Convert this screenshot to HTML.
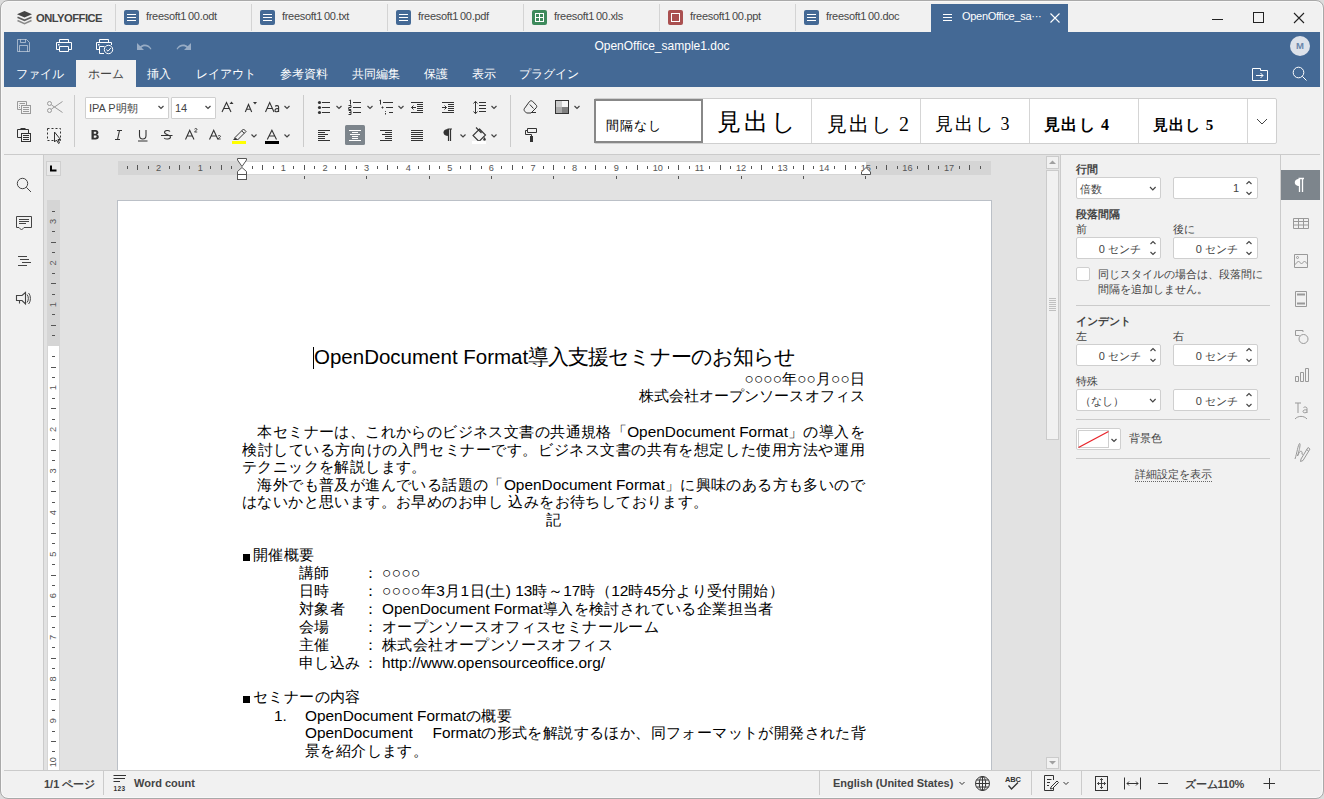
<!DOCTYPE html>
<html><head><meta charset="utf-8">
<style>
*{box-sizing:border-box;margin:0;padding:0}
html,body{width:1324px;height:799px;overflow:hidden;background:#dcdcdc;font-family:"Liberation Sans",sans-serif;color:#444}
.a{position:absolute}
.win{position:absolute;left:0;top:0;width:1324px;height:799px;border:1px solid #a9a9a9;border-radius:8px;background:#f1f1f1;overflow:hidden;box-shadow:inset 0 0 0 1px #f8f8f8}
svg{position:absolute;overflow:visible}
.sep{position:absolute;width:1px;background:#d4d4d4}
.tabt{position:absolute;font-size:11px;color:#474747;top:10px;letter-spacing:-0.3px;white-space:nowrap}
.menu{position:absolute;top:66px;font-size:12px;color:#fff;white-space:nowrap}
.tb{position:absolute;white-space:nowrap}
.combo{position:absolute;background:#fff;border:1px solid #cfcfcf;border-radius:1px}
.doc{position:absolute;white-space:nowrap;color:#000;font-size:15.4px;line-height:18px;letter-spacing:0.4px}
.L{letter-spacing:0}
.rp{position:absolute;font-size:11px;color:#444;white-space:nowrap}
.rpb{font-weight:bold}
.spin{position:absolute;background:#fff;border:1px solid #cfcfcf;border-radius:2px;width:85px;height:22px}
</style></head><body>
<div class="win"></div>
<!-- TAB BAR -->


<!-- logo -->
<svg style="left:0;top:0" width="40" height="32">
<path d="M24.5 11 L32 14.3 L24.5 17.6 L17 14.3 Z" fill="#444"/>
<path d="M17.5 17.2 L24.5 20.3 L31.5 17.2" fill="none" stroke="#5f5f5f" stroke-width="1.6"/>
<path d="M17.5 20.6 L24.5 23.7 L31.5 20.6" fill="none" stroke="#8a8a8a" stroke-width="1.6"/>
</svg>
<div class="a" style="left:36px;top:11px;font-size:11.2px;line-height:14px;font-weight:bold;color:#444;letter-spacing:-0.5px;white-space:nowrap">ONLYOFFICE</div>
<div class="sep" style="left:115px;top:4px;height:27px"></div>
<div class="sep" style="left:251px;top:4px;height:27px"></div>
<div class="sep" style="left:387px;top:4px;height:27px"></div>
<div class="sep" style="left:523px;top:4px;height:27px"></div>
<div class="sep" style="left:659px;top:4px;height:27px"></div>
<div class="sep" style="left:795px;top:4px;height:27px"></div>
<div class="a" style="left:124px;top:10px;width:15px;height:15px;background:#446995;border-radius:2px"></div>
<div class="a" style="left:127px;top:14px;width:9px;height:1px;background:#fff;box-shadow:0 3px 0 #fff,0 6px 0 #fff"></div>
<div class="tabt" style="left:146px">freesoft1&#8201;00.odt</div>
<div class="a" style="left:260px;top:10px;width:15px;height:15px;background:#446995;border-radius:2px"></div>
<div class="a" style="left:263px;top:14px;width:9px;height:1px;background:#fff;box-shadow:0 3px 0 #fff,0 6px 0 #fff"></div>
<div class="tabt" style="left:282px">freesoft1&#8201;00.txt</div>
<div class="a" style="left:396px;top:10px;width:15px;height:15px;background:#446995;border-radius:2px"></div>
<div class="a" style="left:399px;top:14px;width:9px;height:1px;background:#fff;box-shadow:0 3px 0 #fff,0 6px 0 #fff"></div>
<div class="tabt" style="left:418px">freesoft1&#8201;00.pdf</div>
<div class="a" style="left:532px;top:10px;width:15px;height:15px;background:#3d8a5c;border-radius:2px"></div>
<div class="a" style="left:535px;top:13px;width:9px;height:9px;background:#fff"></div>
<div class="a" style="left:536px;top:14px;width:3px;height:3px;background:#3d8a5c;box-shadow:4px 0 0 #3d8a5c,0 4px 0 #3d8a5c,4px 4px 0 #3d8a5c"></div>
<div class="tabt" style="left:554px">freesoft1&#8201;00.xls</div>
<div class="a" style="left:668px;top:10px;width:15px;height:15px;background:#aa5050;border-radius:2px"></div>
<div class="a" style="left:671px;top:13px;width:9px;height:9px;border:1px solid #fff;background:#aa5050"></div>
<div class="tabt" style="left:690px">freesoft1&#8201;00.ppt</div>
<div class="a" style="left:804px;top:10px;width:15px;height:15px;background:#446995;border-radius:2px"></div>
<div class="a" style="left:807px;top:14px;width:9px;height:1px;background:#fff;box-shadow:0 3px 0 #fff,0 6px 0 #fff"></div>
<div class="tabt" style="left:826px">freesoft1&#8201;00.doc</div>

<!-- active tab -->
<div class="a" style="left:931px;top:4px;width:137px;height:29px;background:#446995"></div>
<div class="a" style="left:943px;top:14px;width:9px;height:1px;background:#fff;box-shadow:0 3px 0 #fff,0 6px 0 #fff"></div>
<div class="tabt" style="left:962px;color:#fff">OpenOffice_sa&#183;&#183;&#183;</div>
<svg style="left:1050px;top:13px" width="10" height="10"><path d="M0.5 0.5 L9.5 9.5 M9.5 0.5 L0.5 9.5" stroke="#fff" stroke-width="1.1"/></svg>
<!-- window controls -->
<div class="a" style="left:1212px;top:19px;width:11px;height:1px;background:#222"></div>
<div class="a" style="left:1253px;top:12px;width:11px;height:11px;border:1px solid #222"></div>
<svg style="left:1293px;top:12px" width="12" height="12"><path d="M1 1 L11 11 M11 1 L1 11" stroke="#222" stroke-width="1.1"/></svg>

<!-- HEADER -->
<div class="a" style="left:4px;top:32px;width:1316px;height:55px;background:#446995"></div>

<!-- title icons -->
<svg style="left:0;top:32px" width="200" height="28" fill="none" stroke-width="1">
<g stroke="rgba(255,255,255,0.5)">
<path d="M17.5 7.5 H26.5 L29.5 10.5 V19.5 H17.5 Z"/>
<path d="M20.5 7.5 V10.5 H25.5 V7.5"/>
<path d="M19.5 19.5 V13.5 H27.5 V19.5"/>
</g>
<g stroke="#fff">
<path d="M59.5 10 V7.5 H68.5 V10"/>
<path d="M59.5 17.5 H56.5 V10.5 H71.5 V17.5 H68.5"/>
<path d="M59.5 14.5 H68.5 V19.5 H59.5 Z"/>
<path d="M99.5 10 V7.5 H108.5 V10"/>
<path d="M99.5 17.5 H96.5 V10.5 H111.5 V13"/>
<path d="M99.5 14.5 H104.5 M99.5 14.5 V21.5 H104"/>
<circle cx="108.5" cy="17.5" r="4.2"/>
<path d="M106.3 17.6 L108 19.2 L110.8 16"/>
</g>
<rect x="58" y="12" width="1.5" height="1.5" fill="#fff" stroke="none"/>
<rect x="98" y="12" width="1.5" height="1.5" fill="#fff" stroke="none"/>
<g fill="rgba(255,255,255,0.45)" stroke="none">
<path d="M137 11 L137 18 L144 18 L141.5 15.5 C144 13.5 148 13.8 150.5 17.5 L151.5 17 C149 12 143.5 11.5 140.3 14.3 Z"/>
<path d="M191 11 L191 18 L184 18 L186.5 15.5 C184 13.5 180 13.8 177.5 17.5 L176.5 17 C179 12 184.5 11.5 187.7 14.3 Z"/>
</g>
</svg>
<div class="a" style="left:0;top:39px;width:1324px;text-align:center;font-size:12px;color:#fff;white-space:nowrap">OpenOffice_sample1.doc</div>
<div class="a" style="left:1290px;top:36px;width:20px;height:20px;border-radius:50%;background:#dde2ea"></div>
<div class="a" style="left:1290px;top:40px;width:20px;text-align:center;font-size:9.5px;line-height:11px;font-weight:bold;color:#6a86ab">M</div>
<!-- menu -->
<div class="a" style="left:76px;top:60px;width:60px;height:27px;background:#f1f1f1"></div>
<div class="menu" style="left:16px">ファイル</div>
<div class="menu" style="left:88px;color:#444">ホーム</div>
<div class="menu" style="left:147px">挿入</div>
<div class="menu" style="left:196px">レイアウト</div>
<div class="menu" style="left:280px">参考資料</div>
<div class="menu" style="left:352px">共同編集</div>
<div class="menu" style="left:424px">保護</div>
<div class="menu" style="left:472px">表示</div>
<div class="menu" style="left:519px">プラグイン</div>
<svg style="left:1240px;top:60px" width="80" height="27" fill="none" stroke="#fff" stroke-width="1">
<path d="M12.5 20.5 V8.5 H20.5 V10.5 H27.5 V20.5 Z"/>
<path d="M16 15.5 H23 M20.5 13 L23 15.5 L20.5 18"/>
<circle cx="58.5" cy="12.5" r="5.3"/>
<path d="M62.3 16.3 L66.5 20.5"/>
</svg>
<!-- TOOLBAR -->
<div class="a" style="left:4px;top:87px;width:1316px;height:68px;background:#f1f1f1;border-bottom:1px solid #cbcbcb"></div>

<!-- combos -->
<div class="combo" style="left:85px;top:97px;width:84px;height:22px"></div>
<div class="tb" style="left:89px;top:101px;font-size:11px;line-height:14px;color:#444">IPA P明朝</div>
<div class="combo" style="left:171px;top:97px;width:45px;height:22px"></div>
<div class="tb" style="left:175px;top:101px;font-size:11px;line-height:14px;color:#444">14</div>
<!-- toolbar icons -->
<svg style="left:0;top:0" width="600" height="155" fill="none" stroke-width="1">
<!-- copy (disabled) -->
<g stroke="#9a9a9a">
<path d="M21 109.5 H17.5 V101.5 H26.5 V105"/>
<rect x="21.5" y="105.5" width="9" height="8"/>
<path d="M23 107.5 H29 M23 109.5 H29 M23 111.5 H29 M19.5 103.5 H25"/><path d="M19.5 105 V106 M19.5 107 V108" />
<circle cx="49.5" cy="103.5" r="2"/><circle cx="49.5" cy="110.5" r="2"/>
<path d="M51.3 104.8 L62.5 112.5 M51.3 109.2 L62.5 101.5"/>
</g>
<!-- paste -->
<g stroke="#333">
<path d="M21 137.5 H17.5 V129.5 H28.5 V133"/>
<path d="M20.5 129 H25.5" stroke-width="2"/>
<rect x="21.5" y="133.5" width="9" height="8"/>
<path d="M23 135.5 H29 M23 137.5 H29 M23 139.5 H29"/>
<path d="M47.5 128.5 H60.5 V140.5 H47.5 Z" stroke-dasharray="2 2"/>
<path d="M54.5 132 V142 L56.5 140 L58.5 143.5 L59.5 143 L58 139.5 L60.5 139.5 Z" fill="#f1f1f1"/>
</g>
<path d="M74.5 95 V147" stroke="#cbcbcb"/>
<path d="M303.5 95 V147" stroke="#cbcbcb"/>
<path d="M510.5 95 V147" stroke="#cbcbcb"/>
<!-- chevrons -->
<g stroke="#444" stroke-width="1.2">
<path d="M158.5 106 L161 108.5 L163.5 106"/>
<path d="M205.5 106 L208 108.5 L210.5 106"/>
<path d="M284.5 106 L287 108.5 L289.5 106"/>
<path d="M251.5 134.5 L254 137 L256.5 134.5"/>
<path d="M284.5 134.5 L287 137 L289.5 134.5"/>
<path d="M336.5 106 L339 108.5 L341.5 106"/>
<path d="M367.5 106 L370 108.5 L372.5 106"/>
<path d="M398.5 106 L401 108.5 L403.5 106"/>
<path d="M491.5 106 L494 108.5 L496.5 106"/>
<path d="M460.5 134.5 L463 137 L465.5 134.5"/>
<path d="M491.5 134.5 L494 137 L496.5 134.5"/>
<path d="M574.5 106 L577 108.5 L579.5 106"/>
</g>
<!-- A+ A- Aa -->
<g stroke="#333" stroke-width="1.1">
<path d="M222 112 L226.5 102.5 L231 112 M223.6 108.5 H229.4"/>
<path d="M245.3 112 L248.5 104.5 L251.7 112 M246.5 109.2 H250.5"/>
<path d="M265.5 112 L269.7 102.5 L274 112 M267 108.5 H272.5"/>
</g>
<path d="M229.5 104 L231.5 101.5 L233.5 104 Z" fill="#333"/>
<path d="M253 102 L255 104.5 L257 102 Z" fill="#333"/>
<g stroke="#333" stroke-width="1.1"><path d="M275.2 106.3 C276 105.3 278.6 105.3 278.6 107 V112 M278.6 108.8 C277 108.3 275 108.8 275 110.5 C275 112.3 278 112 278.6 110.5"/></g>
<!-- B I U S A2 A2 -->
<path d="M91.5 130 H95.5 C97.8 130 98.4 131.5 98.4 132.6 C98.4 133.8 97.6 134.4 96.8 134.6 C98 134.8 98.8 135.7 98.8 137 C98.8 138.6 97.7 139.5 95.6 139.5 H91.5 Z" fill="#333"/>
<path d="M93.8 131.8 V133.8 H95.3 C96 133.8 96.3 133.3 96.3 132.8 C96.3 132.2 96 131.8 95.3 131.8 Z M93.8 135.6 V137.7 H95.5 C96.3 137.7 96.6 137.2 96.6 136.6 C96.6 136 96.3 135.6 95.5 135.6 Z" fill="#f1f1f1"/>
<g stroke="#333" stroke-width="1.1">
<path d="M117 130.5 H122 M115 139.5 H120 M119.5 130.5 L117.5 139.5"/>
<path d="M139.5 130 V135.5 C139.5 138 140.8 139 142.8 139 C144.8 139 146 138 146 135.5 V130 M138 141 H147.5"/>
<path d="M170 131.5 C169 130.2 164.5 130 164.5 132.5 C164.5 135 170.5 134.5 170.5 137 C170.5 139.5 165.5 139.5 164.2 138 M161 135.5 H172.5"/>
<path d="M185.5 139.5 L189.7 130.2 L194 139.5 M187 136 H192.5"/>
<path d="M209.5 139.5 L213.7 130.2 L218 139.5 M211 136 H216.5"/>
</g>
<g stroke="#333" stroke-width="0.9">
<path d="M194.5 129.2 C195 128.3 197 128.3 197 129.4 C197 130.3 194.5 131.3 194.5 132 H197.2"/>
<path d="M218 136.2 C218.5 135.3 220.5 135.3 220.5 136.4 C220.5 137.3 218 138.3 218 139 H220.7"/>
</g>
<!-- highlighter -->
<g stroke="#333"><path d="M235 137.5 L243.5 129 L246 131.5 L237.5 140 Z M241.7 130.8 L244.2 133.3"/></g>
<path d="M235 137.5 L233 140 L237.5 140 Z" fill="#333"/>
<rect x="232" y="141" width="14" height="3" fill="#ff0"/>
<g stroke="#333" stroke-width="1.1"><path d="M267.3 139.5 L271.9 130.2 L276.5 139.5 M269 136 H275"/></g>
<rect x="265" y="141" width="14" height="3" fill="#000"/>
<!-- lists -->
<g fill="#333"><circle cx="319.5" cy="102.5" r="1.6"/><circle cx="319.5" cy="107.5" r="1.6"/><circle cx="319.5" cy="112.5" r="1.6"/></g>
<g stroke="#333">
<path d="M322 102.5 H330 M322 107.5 H330 M322 112.5 H330"/>
<path d="M353 102.5 H361 M353 107.5 H361 M353 112.5 H361"/>
<path d="M349.5 100.5 L350.5 100 V104.5 M348.5 105.5 H351 V107.5 H348.7 V109.5 H351.2 M348.5 110.5 H351 V114.5 H348.5 M349 112.5 H351"/>
<path d="M379.5 100.5 L380.5 100 V104.5 M383 102.5 H393 M386 107.5 H393 M389 112.5 H393 M382.5 106.5 V108.5 M381.5 107.5 H383.5 M385.5 111 V111.8 M385.5 113 V114.5"/>
<!-- indent -->
<path d="M411 102.5 H423 M417 104.5 H423 M417 106.5 H423 M417 108.5 H423 M417 110.5 H423 M411 112.5 H423 M411.5 107.5 H416 M413.5 105.5 L411.5 107.5 L413.5 109.5"/>
<path d="M442 102.5 H454 M448 104.5 H454 M448 106.5 H454 M448 108.5 H454 M448 110.5 H454 M442 112.5 H454 M442 107.5 H446.5 M444.5 105.5 L446.5 107.5 L444.5 109.5"/>
<path d="M475.5 101.5 V113.5 M473.5 103.5 L475.5 101.3 L477.5 103.5 M473.5 111.5 L475.5 113.7 L477.5 111.5 M479 102.5 H486 M479 105.5 H486 M479 108.5 H486 M479 111.5 H486"/>
<!-- align -->
<path d="M318 130.5 H330 M318 132.5 H325 M318 134.5 H328 M318 136.5 H325 M318 138.5 H325 M318 140.5 H330"/>
<path d="M380 130.5 H392 M385 132.5 H392 M382 134.5 H392 M385 136.5 H392 M385 138.5 H392 M380 140.5 H392"/>
<path d="M411 130.5 H423 M411 132.5 H423 M411 134.5 H423 M411 136.5 H423 M411 138.5 H423 M411 140.5 H423"/>
</g>
<rect x="345" y="125" width="20" height="20" rx="1.5" fill="#7d858c"/>
<path d="M349 130.5 H361 M352 132.5 H358 M350 134.5 H360 M352 136.5 H358 M352 138.5 H358 M349 140.5 H361" stroke="#fff"/>
<!-- pilcrow -->
<path d="M447.5 129 H452 M448.5 129.5 V141 M450.5 129.5 V141" stroke="#333" stroke-width="1.2"/>
<path d="M448.5 129 C445 129 443.5 130.5 443.5 132.5 C443.5 134.5 445 136 448.5 136 Z" fill="#333"/>
<!-- bucket -->
<path d="M479.5 129 L485.5 135 L479 141.5 L473 135.5 Z M476 127.5 L481.5 133" stroke="#333" stroke-width="1.1"/>
<path d="M484.5 137 C483.5 138.5 483.2 139 483.2 139.5 C483.2 140.3 483.8 140.7 484.5 140.7 C485.2 140.7 485.8 140.3 485.8 139.5 C485.8 139 485.5 138.5 484.5 137 Z" fill="#333"/>
<rect x="472" y="141" width="14" height="3" fill="#fff"/>
<!-- eraser -->
<path d="M529.5 101.5 C530.5 100.5 531.7 100.5 532.7 101.5 L536 104.8 C537 105.8 537 107 536 108 L531 113 H526.5 L524.8 111.3 C523.8 110.3 523.8 109 524.8 108 Z M529.8 104.5 L533.5 108.5 M531 112.5 H536" stroke="#333"/>
<!-- color scheme -->
<rect x="555.5" y="100.5" width="13" height="13" stroke="#333" stroke-width="1"/>
<rect x="556" y="101" width="6" height="6" fill="#ccc"/><rect x="562" y="101" width="6" height="6" fill="#f5f5f5"/>
<rect x="556" y="107" width="6" height="6" fill="#aaa"/><rect x="562" y="107" width="6" height="6" fill="#808080"/>
<!-- painter -->
<path d="M527.5 128.5 H536.5 V132.5 H527.5 Z M527.5 130.5 H525.5 V134.5 H531.5 V136" stroke="#333"/>
<rect x="530" y="136" width="3" height="6" fill="#333"/>
</svg>

<!-- style gallery -->
<div class="a" style="left:594px;top:98px;width:683px;height:46px;background:#fff;border:1px solid #cfcfcf;border-radius:2px"></div>
<div class="a" style="left:811px;top:99px;width:1px;height:44px;background:#d5d5d5"></div>
<div class="a" style="left:920px;top:99px;width:1px;height:44px;background:#d5d5d5"></div>
<div class="a" style="left:1029px;top:99px;width:1px;height:44px;background:#d5d5d5"></div>
<div class="a" style="left:1138px;top:99px;width:1px;height:44px;background:#d5d5d5"></div>
<div class="a" style="left:1247px;top:99px;width:1px;height:44px;background:#d5d5d5"></div>
<div class="a" style="left:594px;top:99px;width:109px;height:44px;border:2px solid #888"></div>
<div class="tb" style="left:606px;top:118px;font-size:13px;line-height:16px;color:#000;letter-spacing:1px">間隔なし</div>
<div class="tb" style="left:717px;top:108px;font-family:'Liberation Serif',serif;font-size:24px;line-height:28px;color:#000;letter-spacing:3px">見出し</div>
<div class="tb" style="left:827px;top:112px;font-family:'Liberation Serif',serif;font-size:20px;line-height:24px;color:#000;letter-spacing:1.75px">見出し 2</div>
<div class="tb" style="left:935px;top:113px;font-family:'Liberation Serif',serif;font-size:18px;line-height:22px;color:#000;letter-spacing:1.75px">見出し 3</div>
<div class="tb" style="left:1044px;top:115px;font-family:'Liberation Serif',serif;font-size:16px;line-height:20px;font-weight:bold;color:#000;letter-spacing:1.25px">見出し 4</div>
<div class="tb" style="left:1153px;top:116px;font-family:'Liberation Serif',serif;font-size:15px;line-height:19px;font-weight:bold;color:#000;letter-spacing:1px">見出し 5</div>
<svg style="left:1247px;top:98px" width="30" height="46"><path d="M10 21 L15 26 L20 21" fill="none" stroke="#444" stroke-width="1"/></svg>
<!-- LEFT SIDEBAR -->
<div class="a" style="left:4px;top:155px;width:40px;height:615px;background:#f1f1f1;border-right:1px solid #cbcbcb"></div>

<!-- left sidebar icons -->
<svg style="left:0;top:155px" width="44" height="160" fill="none" stroke="#444" stroke-width="1">
<circle cx="22.5" cy="28.5" r="5.2"/>
<path d="M26.3 32.3 L31 37"/>
<path d="M16.5 61.5 H31.5 V72.5 H24 L21.5 75 L19 72.5 H16.5 Z"/>
<path d="M19 64.5 H29 M19 66.5 H29 M19 68.5 H26"/>
<path d="M18 101.5 H27 M20 104.5 H29 M22 107.5 H31 M18 110.5 H27" stroke-width="1.1"/>
<path d="M16.5 140.5 H22 L25.5 137.5 V149 L22 145.5 H16.5 Z M19.5 145.5 V148.5" stroke-width="1.1"/>
<path d="M27 139.5 C28.8 141.3 28.8 145.7 27 147.5 M28.5 138 C31 140.5 31 146.5 28.5 149"/>
</svg>
<!-- CANVAS -->
<div class="a" style="left:44px;top:155px;width:1016px;height:615px;background:#e2e2e2"></div>
<!-- RULER -->
<svg style="left:0;top:0" width="1060" height="800">
<rect x="118" y="161" width="873" height="14" fill="#d5d5d5"/>
<rect x="242" y="162" width="624" height="12" fill="#fff"/>
<rect x="127" y="166" width="1" height="3" fill="#555"/>
<rect x="137" y="165" width="1" height="5" fill="#555"/>
<rect x="148" y="166" width="1" height="3" fill="#555"/>
<rect x="169" y="166" width="1" height="3" fill="#555"/>
<rect x="179" y="165" width="1" height="5" fill="#555"/>
<rect x="189" y="166" width="1" height="3" fill="#555"/>
<text x="158.6" y="170.6" font-size="9.2" fill="#555" text-anchor="middle" font-family="Liberation Sans">2</text>
<rect x="210" y="166" width="1" height="3" fill="#555"/>
<rect x="221" y="165" width="1" height="5" fill="#555"/>
<rect x="231" y="166" width="1" height="3" fill="#555"/>
<text x="200.2" y="170.6" font-size="9.2" fill="#555" text-anchor="middle" font-family="Liberation Sans">1</text>
<rect x="252" y="166" width="1" height="3" fill="#555"/>
<rect x="262" y="165" width="1" height="5" fill="#555"/>
<rect x="273" y="166" width="1" height="3" fill="#555"/>
<rect x="293" y="166" width="1" height="3" fill="#555"/>
<rect x="304" y="165" width="1" height="5" fill="#555"/>
<rect x="314" y="166" width="1" height="3" fill="#555"/>
<text x="283.4" y="170.6" font-size="9.2" fill="#555" text-anchor="middle" font-family="Liberation Sans">1</text>
<rect x="335" y="166" width="1" height="3" fill="#555"/>
<rect x="345" y="165" width="1" height="5" fill="#555"/>
<rect x="356" y="166" width="1" height="3" fill="#555"/>
<text x="325.0" y="170.6" font-size="9.2" fill="#555" text-anchor="middle" font-family="Liberation Sans">2</text>
<rect x="377" y="166" width="1" height="3" fill="#555"/>
<rect x="387" y="165" width="1" height="5" fill="#555"/>
<rect x="397" y="166" width="1" height="3" fill="#555"/>
<text x="366.6" y="170.6" font-size="9.2" fill="#555" text-anchor="middle" font-family="Liberation Sans">3</text>
<rect x="418" y="166" width="1" height="3" fill="#555"/>
<rect x="429" y="165" width="1" height="5" fill="#555"/>
<rect x="439" y="166" width="1" height="3" fill="#555"/>
<text x="408.2" y="170.6" font-size="9.2" fill="#555" text-anchor="middle" font-family="Liberation Sans">4</text>
<rect x="460" y="166" width="1" height="3" fill="#555"/>
<rect x="470" y="165" width="1" height="5" fill="#555"/>
<rect x="481" y="166" width="1" height="3" fill="#555"/>
<text x="449.8" y="170.6" font-size="9.2" fill="#555" text-anchor="middle" font-family="Liberation Sans">5</text>
<rect x="501" y="166" width="1" height="3" fill="#555"/>
<rect x="512" y="165" width="1" height="5" fill="#555"/>
<rect x="522" y="166" width="1" height="3" fill="#555"/>
<text x="491.4" y="170.6" font-size="9.2" fill="#555" text-anchor="middle" font-family="Liberation Sans">6</text>
<rect x="543" y="166" width="1" height="3" fill="#555"/>
<rect x="553" y="165" width="1" height="5" fill="#555"/>
<rect x="564" y="166" width="1" height="3" fill="#555"/>
<text x="533.0" y="170.6" font-size="9.2" fill="#555" text-anchor="middle" font-family="Liberation Sans">7</text>
<rect x="585" y="166" width="1" height="3" fill="#555"/>
<rect x="595" y="165" width="1" height="5" fill="#555"/>
<rect x="605" y="166" width="1" height="3" fill="#555"/>
<text x="574.6" y="170.6" font-size="9.2" fill="#555" text-anchor="middle" font-family="Liberation Sans">8</text>
<rect x="626" y="166" width="1" height="3" fill="#555"/>
<rect x="637" y="165" width="1" height="5" fill="#555"/>
<rect x="647" y="166" width="1" height="3" fill="#555"/>
<text x="616.2" y="170.6" font-size="9.2" fill="#555" text-anchor="middle" font-family="Liberation Sans">9</text>
<rect x="668" y="166" width="1" height="3" fill="#555"/>
<rect x="678" y="165" width="1" height="5" fill="#555"/>
<rect x="689" y="166" width="1" height="3" fill="#555"/>
<text x="657.8" y="170.6" font-size="9.2" fill="#555" text-anchor="middle" font-family="Liberation Sans">10</text>
<rect x="709" y="166" width="1" height="3" fill="#555"/>
<rect x="720" y="165" width="1" height="5" fill="#555"/>
<rect x="730" y="166" width="1" height="3" fill="#555"/>
<text x="699.4" y="170.6" font-size="9.2" fill="#555" text-anchor="middle" font-family="Liberation Sans">11</text>
<rect x="751" y="166" width="1" height="3" fill="#555"/>
<rect x="761" y="165" width="1" height="5" fill="#555"/>
<rect x="772" y="166" width="1" height="3" fill="#555"/>
<text x="741.0" y="170.6" font-size="9.2" fill="#555" text-anchor="middle" font-family="Liberation Sans">12</text>
<rect x="793" y="166" width="1" height="3" fill="#555"/>
<rect x="803" y="165" width="1" height="5" fill="#555"/>
<rect x="813" y="166" width="1" height="3" fill="#555"/>
<text x="782.6" y="170.6" font-size="9.2" fill="#555" text-anchor="middle" font-family="Liberation Sans">13</text>
<rect x="834" y="166" width="1" height="3" fill="#555"/>
<rect x="845" y="165" width="1" height="5" fill="#555"/>
<rect x="855" y="166" width="1" height="3" fill="#555"/>
<text x="824.2" y="170.6" font-size="9.2" fill="#555" text-anchor="middle" font-family="Liberation Sans">14</text>
<rect x="876" y="166" width="1" height="3" fill="#555"/>
<rect x="886" y="165" width="1" height="5" fill="#555"/>
<rect x="897" y="166" width="1" height="3" fill="#555"/>
<text x="865.8" y="170.6" font-size="9.2" fill="#555" text-anchor="middle" font-family="Liberation Sans">15</text>
<rect x="917" y="166" width="1" height="3" fill="#555"/>
<rect x="928" y="165" width="1" height="5" fill="#555"/>
<rect x="938" y="166" width="1" height="3" fill="#555"/>
<text x="907.4" y="170.6" font-size="9.2" fill="#555" text-anchor="middle" font-family="Liberation Sans">16</text>
<rect x="959" y="166" width="1" height="3" fill="#555"/>
<rect x="969" y="165" width="1" height="5" fill="#555"/>
<rect x="980" y="166" width="1" height="3" fill="#555"/>
<text x="949.0" y="170.6" font-size="9.2" fill="#555" text-anchor="middle" font-family="Liberation Sans">17</text>
<rect x="304" y="176" width="1" height="3" fill="#555"/>
<rect x="366" y="176" width="1" height="3" fill="#555"/>
<rect x="429" y="176" width="1" height="3" fill="#555"/>
<rect x="491" y="176" width="1" height="3" fill="#555"/>
<rect x="553" y="176" width="1" height="3" fill="#555"/>
<rect x="616" y="176" width="1" height="3" fill="#555"/>
<rect x="678" y="176" width="1" height="3" fill="#555"/>
<rect x="741" y="176" width="1" height="3" fill="#555"/>
<rect x="803" y="176" width="1" height="3" fill="#555"/>
<rect x="865" y="176" width="1" height="3" fill="#555"/>
<path d="M237.5 158.5 H246.5 V160 L242 166.5 L237.5 160 Z M242 167.5 L246.5 171.5 V174.5 H237.5 V171.5 Z" fill="#fff" stroke="#555" stroke-width="1"/>
<rect x="237.5" y="174.5" width="9" height="5" fill="#fff" stroke="#555" stroke-width="1"/>
<path d="M861.5 174.5 V172 L866 167.5 L870.5 172 V174.5 Z" fill="#fff" stroke="#555" stroke-width="1"/>
<rect x="46.5" y="161.5" width="14" height="14" fill="#e8e8e8" stroke="#cfcfcf"/>
<path d="M51 165.5 V170.5 H56.5" stroke="#000" stroke-width="2" fill="none"/>
<rect x="47" y="200" width="13" height="570" fill="#d5d5d5"/>
<rect x="48" y="346" width="11" height="430" fill="#fff"/>
<rect x="52" y="211" width="3" height="1" fill="#555"/>
<rect x="52" y="231" width="3" height="1" fill="#555"/>
<rect x="51" y="242" width="5" height="1" fill="#555"/>
<rect x="52" y="252" width="3" height="1" fill="#555"/>
<text x="0" y="0" transform="translate(55.8 221.4) rotate(-90)" font-size="9.2" fill="#555" text-anchor="middle" font-family="Liberation Sans">3</text>
<rect x="52" y="273" width="3" height="1" fill="#555"/>
<rect x="51" y="283" width="5" height="1" fill="#555"/>
<rect x="52" y="294" width="3" height="1" fill="#555"/>
<text x="0" y="0" transform="translate(55.8 263.0) rotate(-90)" font-size="9.2" fill="#555" text-anchor="middle" font-family="Liberation Sans">2</text>
<rect x="52" y="314" width="3" height="1" fill="#555"/>
<rect x="51" y="325" width="5" height="1" fill="#555"/>
<rect x="52" y="335" width="3" height="1" fill="#555"/>
<text x="0" y="0" transform="translate(55.8 304.6) rotate(-90)" font-size="9.2" fill="#555" text-anchor="middle" font-family="Liberation Sans">1</text>
<rect x="52" y="356" width="3" height="1" fill="#555"/>
<rect x="51" y="367" width="5" height="1" fill="#555"/>
<rect x="52" y="377" width="3" height="1" fill="#555"/>
<rect x="52" y="398" width="3" height="1" fill="#555"/>
<rect x="51" y="408" width="5" height="1" fill="#555"/>
<rect x="52" y="419" width="3" height="1" fill="#555"/>
<text x="0" y="0" transform="translate(55.8 387.8) rotate(-90)" font-size="9.2" fill="#555" text-anchor="middle" font-family="Liberation Sans">1</text>
<rect x="52" y="439" width="3" height="1" fill="#555"/>
<rect x="51" y="450" width="5" height="1" fill="#555"/>
<rect x="52" y="460" width="3" height="1" fill="#555"/>
<text x="0" y="0" transform="translate(55.8 429.4) rotate(-90)" font-size="9.2" fill="#555" text-anchor="middle" font-family="Liberation Sans">2</text>
<rect x="52" y="481" width="3" height="1" fill="#555"/>
<rect x="51" y="491" width="5" height="1" fill="#555"/>
<rect x="52" y="502" width="3" height="1" fill="#555"/>
<text x="0" y="0" transform="translate(55.8 471.0) rotate(-90)" font-size="9.2" fill="#555" text-anchor="middle" font-family="Liberation Sans">3</text>
<rect x="52" y="523" width="3" height="1" fill="#555"/>
<rect x="51" y="533" width="5" height="1" fill="#555"/>
<rect x="52" y="543" width="3" height="1" fill="#555"/>
<text x="0" y="0" transform="translate(55.8 512.6) rotate(-90)" font-size="9.2" fill="#555" text-anchor="middle" font-family="Liberation Sans">4</text>
<rect x="52" y="564" width="3" height="1" fill="#555"/>
<rect x="51" y="575" width="5" height="1" fill="#555"/>
<rect x="52" y="585" width="3" height="1" fill="#555"/>
<text x="0" y="0" transform="translate(55.8 554.2) rotate(-90)" font-size="9.2" fill="#555" text-anchor="middle" font-family="Liberation Sans">5</text>
<rect x="52" y="606" width="3" height="1" fill="#555"/>
<rect x="51" y="616" width="5" height="1" fill="#555"/>
<rect x="52" y="627" width="3" height="1" fill="#555"/>
<text x="0" y="0" transform="translate(55.8 595.8) rotate(-90)" font-size="9.2" fill="#555" text-anchor="middle" font-family="Liberation Sans">6</text>
<rect x="52" y="647" width="3" height="1" fill="#555"/>
<rect x="51" y="658" width="5" height="1" fill="#555"/>
<rect x="52" y="668" width="3" height="1" fill="#555"/>
<text x="0" y="0" transform="translate(55.8 637.4) rotate(-90)" font-size="9.2" fill="#555" text-anchor="middle" font-family="Liberation Sans">7</text>
<rect x="52" y="689" width="3" height="1" fill="#555"/>
<rect x="51" y="699" width="5" height="1" fill="#555"/>
<rect x="52" y="710" width="3" height="1" fill="#555"/>
<text x="0" y="0" transform="translate(55.8 679.0) rotate(-90)" font-size="9.2" fill="#555" text-anchor="middle" font-family="Liberation Sans">8</text>
<rect x="52" y="731" width="3" height="1" fill="#555"/>
<rect x="51" y="741" width="5" height="1" fill="#555"/>
<rect x="52" y="751" width="3" height="1" fill="#555"/>
<text x="0" y="0" transform="translate(55.8 720.6) rotate(-90)" font-size="9.2" fill="#555" text-anchor="middle" font-family="Liberation Sans">9</text>
<text x="0" y="0" transform="translate(55.8 762.2) rotate(-90)" font-size="9.2" fill="#555" text-anchor="middle" font-family="Liberation Sans">10</text>
</svg>
<!-- PAGE -->
<div class="a" style="left:117px;top:200px;width:875px;height:570px;background:#fff;border:1px solid #bbc0c7;border-bottom:none"></div>
<!-- DOC TEXT -->
<div class="a" style="left:313px;top:347px;width:1px;height:22px;background:#000"></div>
<div class="doc" style="left:314px;top:346px;font-size:20.5px;line-height:22px;letter-spacing:0"><span class="L">OpenDocument Format</span><span id="ttl" style="font-family:'Liberation Serif',serif;letter-spacing:-1px">導入支援セミナーのお知らせ</span></div>
<div class="doc" style="left:242px;top:369.7px;width:623px;text-align:right;letter-spacing:0.1px">○○○○年○○月○○日</div>
<div class="doc" style="left:242px;top:387.3px;width:623px;text-align:right;letter-spacing:0.1px">株式会社オープンソースオフィス</div>
<div class="doc" style="left:242px;top:423.0px;width:623px;text-align:justify;text-align-last:justify">　本セミナーは、これからのビジネス文書の共通規格「<span class="L">OpenDocument Format</span>」の導入を</div>
<div class="doc" style="left:242px;top:440.5px;width:623px;text-align:justify;text-align-last:justify">検討している方向けの入門セミナーです。ビジネス文書の共有を想定した使用方法や運用</div>
<div class="doc" style="left:242px;top:458.0px">テクニックを解説します。</div>
<div class="doc" style="left:242px;top:475.5px;width:623px;text-align:justify;text-align-last:justify">　海外でも普及が進んでいる話題の「<span class="L">OpenDocument Format</span>」に興味のある方も多いので</div>
<div class="doc" style="left:242px;top:493.0px">はないかと思います。お早めのお申し 込みをお待ちしております。</div>
<div class="doc" style="left:242px;top:511.0px;width:623px;text-align:center">記</div>
<div class="doc" style="left:242px;top:546.0px"><span style="display:inline-block;width:7px;height:7px;background:#000;margin:0 3px 0 1px;vertical-align:-1px"></span>開催概要</div>
<div class="doc" style="left:299px;top:564.0px">講師</div>
<div class="doc" style="left:363px;top:564.0px">：</div>
<div class="doc" style="left:382px;top:564.0px">○○○○</div>
<div class="doc" style="left:299px;top:582.0px">日時</div>
<div class="doc" style="left:363px;top:582.0px">：</div>
<div class="doc" style="left:382px;top:582.0px">○○○○年3月1日(土<span class="L">) 13</span>時～<span class="L">17</span>時（<span class="L">12</span>時<span class="L">45</span>分より受付開始）</div>
<div class="doc" style="left:299px;top:600.0px">対象者</div>
<div class="doc" style="left:363px;top:600.0px">：</div>
<div class="doc" style="left:382px;top:600.0px"><span class="L">OpenDocument Format</span>導入を検討されている企業担当者</div>
<div class="doc" style="left:299px;top:617.6px">会場</div>
<div class="doc" style="left:363px;top:617.6px">：</div>
<div class="doc" style="left:382px;top:617.6px">オープンソースオフィスセミナールーム</div>
<div class="doc" style="left:299px;top:635.5px">主催</div>
<div class="doc" style="left:363px;top:635.5px">：</div>
<div class="doc" style="left:382px;top:635.5px">株式会社オープンソースオフィス</div>
<div class="doc" style="left:299px;top:653.6px">申し込み</div>
<div class="doc" style="left:363px;top:653.6px">：</div>
<div class="doc" style="left:382px;top:653.6px"><span class="L">http://www.opensourceoffice.org/</span></div>
<div class="doc" style="left:242px;top:688.0px"><span style="display:inline-block;width:7px;height:7px;background:#000;margin:0 3px 0 1px;vertical-align:-1px"></span>セミナーの内容</div>
<div class="doc" style="left:274px;top:706.5px"><span class="L">1.</span></div>
<div class="doc" style="left:305px;top:706.5px"><span class="L">OpenDocument Format</span>の概要</div>
<div class="doc" style="left:305px;top:724.0px;width:559px;text-align:justify;text-align-last:justify"><span class="L">OpenDocument</span>　<span class="L"> Format</span>の形式を解説するほか、同フォーマットが開発された背</div>
<div class="doc" style="left:305px;top:741.5px">景を紹介します。</div>
<!-- RIGHT PANEL -->
<div class="a" style="left:1060px;top:155px;width:220px;height:615px;background:#f1f1f1;border-left:1px solid #cbcbcb"></div>
<div class="a" style="left:1280px;top:155px;width:40px;height:615px;background:#f1f1f1;border-left:1px solid #cbcbcb"></div>

<!-- RIGHT PANEL CONTENT -->
<div class="rp rpb" style="left:1076px;top:162px">行間</div>
<div class="spin" style="left:1076px;top:177px"></div>
<div class="rp" style="left:1080px;top:182px">倍数</div>
<div class="spin" style="left:1173px;top:177px"></div>
<div class="rp" style="left:1228px;top:182px;width:11px;text-align:right">1</div>
<div class="rp rpb" style="left:1076px;top:206.5px">段落間隔</div>
<div class="rp" style="left:1076px;top:222px">前</div>
<div class="rp" style="left:1173px;top:222px">後に</div>
<div class="spin" style="left:1076px;top:237px"></div>
<div class="rp" style="left:1076px;top:242px;width:65px;text-align:right">0 センチ</div>
<div class="spin" style="left:1173px;top:237px"></div>
<div class="rp" style="left:1173px;top:242px;width:65px;text-align:right">0 センチ</div>
<div class="a" style="left:1076px;top:267px;width:14px;height:14px;background:#fff;border:1px solid #cfcfcf;border-radius:2px"></div>
<div class="rp" style="left:1098px;top:266.5px;line-height:15px">同じスタイルの場合は、段落間に<br>間隔を追加しません。</div>
<div class="a" style="left:1076px;top:305px;width:194px;height:1px;background:#cbcbcb"></div>
<div class="rp rpb" style="left:1076px;top:313.5px">インデント</div>
<div class="rp" style="left:1076px;top:329px">左</div>
<div class="rp" style="left:1173px;top:329px">右</div>
<div class="spin" style="left:1076px;top:344px"></div>
<div class="rp" style="left:1076px;top:349px;width:65px;text-align:right">0 センチ</div>
<div class="spin" style="left:1173px;top:344px"></div>
<div class="rp" style="left:1173px;top:349px;width:65px;text-align:right">0 センチ</div>
<div class="rp" style="left:1076px;top:374px">特殊</div>
<div class="spin" style="left:1076px;top:389px"></div>
<div class="rp" style="left:1080px;top:394px">（なし）</div>
<div class="spin" style="left:1173px;top:389px"></div>
<div class="rp" style="left:1173px;top:394px;width:65px;text-align:right">0 センチ</div>
<div class="a" style="left:1076px;top:419px;width:194px;height:1px;background:#cbcbcb"></div>
<div class="a" style="left:1076px;top:428px;width:45px;height:22px;background:#fff;border:1px solid #cfcfcf;border-radius:2px"></div>
<div class="a" style="left:1078px;top:430px;width:31px;height:18px;border:1px solid #cfcfcf;background:#fff"></div>
<div class="rp" style="left:1129px;top:431px">背景色</div>
<div class="a" style="left:1076px;top:458px;width:194px;height:1px;background:#cbcbcb"></div>
<div class="rp" style="left:1135px;top:467px;border-bottom:1px dotted #666;line-height:14px">詳細設定を表示</div>
<svg style="left:1060px;top:155px" width="260" height="320" fill="none" stroke="#444" stroke-width="1">
<path d="M90 32 L92.8 34.8 L95.6 32" stroke-width="1.2"/>
<path d="M90 244 L92.8 246.8 L95.6 244" stroke-width="1.2"/>
<path d="M51.5 284 L54 286.5 L56.5 284" stroke-width="1.2"/>
<g stroke-width="1.1" stroke="#444">
<path d="M186.5 29 L189 26.5 L191.5 29 M186.5 37 L189 39.5 L191.5 37"/>
<path d="M90.5 89 L93 86.5 L95.5 89 M90.5 97 L93 99.5 L95.5 97"/>
<path d="M186.5 89 L189 86.5 L191.5 89 M186.5 97 L189 99.5 L191.5 97"/>
<path d="M90.5 196 L93 193.5 L95.5 196 M90.5 204 L93 206.5 L95.5 204"/>
<path d="M186.5 196 L189 193.5 L191.5 196 M186.5 204 L189 206.5 L191.5 204"/>
<path d="M186.5 241 L189 238.5 L191.5 241 M186.5 249 L189 251.5 L191.5 249"/>
</g>
<path d="M18.5 292.5 L48.5 276.5" stroke="#e8242a" stroke-width="1.3"/>
</svg>
<!-- right tab bar -->
<div class="a" style="left:1281px;top:170px;width:39px;height:30px;background:#7d858c"></div>
<svg style="left:1280px;top:155px" width="40" height="320" fill="none" stroke="#999" stroke-width="1">
<path d="M19.5 24 V37 M22.5 24 V37 M18.5 23.5 H24" stroke="#fff" stroke-width="1.3"/>
<path d="M19.5 24 C15.5 24 14.8 26 14.8 27.5 C14.8 29.2 16 31 19.5 31 Z" fill="#fff" stroke="none"/>
<path d="M13.5 63.5 H28.5 V73.5 H13.5 Z M13.5 66.5 H28.5 M13.5 70 H28.5 M18.5 63.5 V73.5 M23.5 63.5 V73.5"/>
<path d="M14.5 99.5 H27.5 V112.5 H14.5 Z M14.5 110 L18.5 106 L21.5 109 L24.5 106 L27.5 109"/>
<circle cx="17.5" cy="102.5" r="1"/>
<path d="M15.5 136.5 H26.5 V151.5 H15.5 Z"/>
<path d="M17 139.5 H25 M17 148.5 H25" stroke-width="2"/>
<path d="M19.5 180.5 H15.5 V175.5 H23 V177"/>
<circle cx="23.5" cy="184" r="4.5"/>
<path d="M15.5 221.5 H18.5 V226.5 H15.5 Z M20.5 217.5 H23.5 V226.5 H20.5 Z M25.5 213.5 H28.5 V226.5 H25.5 Z"/>
<path d="M15 248 H21 M18 248 V258 M23.5 252.5 C25 251.5 27 252 27 253.5 V258 M27 255 C25 254.5 23 255 23 256.5 C23 258.2 26 258 27 257 M15 264 C18 260.5 24 260.5 27 264"/>
<path d="M15 304 C17 298 18 290 19.5 288.5 C21 288 19 297 17.5 301 C19 297 21 295 22 297 C22.5 298 21 300 23 299 M21 304 L28 292.5 L30 294 L23 305.5 L20.5 306.5 Z M26.5 294.5 L28.5 296"/>
</svg>
<!-- STATUS BAR -->
<div class="a" style="left:4px;top:770px;width:1316px;height:27px;background:#f1f1f1;border-top:1px solid #cbcbcb;border-radius:0 0 5px 5px"></div>

<!-- status content -->
<div class="a" style="left:44px;top:777px;font-size:11px;font-weight:bold;color:#444;white-space:nowrap">1/1 ページ</div>
<div class="a" style="left:103px;top:771px;width:1px;height:24px;background:#cbcbcb"></div>
<div class="a" style="left:819px;top:771px;width:1px;height:24px;background:#cbcbcb"></div>
<div class="a" style="left:1031px;top:771px;width:1px;height:24px;background:#cbcbcb"></div>
<div class="a" style="left:1081px;top:771px;width:1px;height:24px;background:#cbcbcb"></div>
<div class="a" style="left:134px;top:777px;font-size:11px;font-weight:bold;color:#444;white-space:nowrap">Word count</div>
<div class="a" style="left:833px;top:777px;font-size:11px;font-weight:bold;color:#444;white-space:nowrap">English (United States)</div>
<div class="a" style="left:1185px;top:777px;font-size:11px;font-weight:bold;color:#444;white-space:nowrap;letter-spacing:-0.2px">ズーム110%</div>
<svg style="left:0;top:770px" width="1324" height="29" fill="none" stroke="#333" stroke-width="1">
<path d="M113.5 5.5 H126 M113.5 8.5 H125 M113.5 11.5 H120"/>
<text x="113.5" y="20.5" font-size="6.5" font-weight="bold" fill="#333" stroke="none" font-family="Liberation Sans" letter-spacing="0.4">123</text>
<path d="M959.5 12 L962 14.5 L964.5 12"/>
<circle cx="982.5" cy="13.5" r="7"/>
<ellipse cx="982.5" cy="13.5" rx="3.2" ry="7"/>
<path d="M975.5 13.5 H989.5 M976.5 10 H988.5 M976.5 17 H988.5 M982.5 6.5 V20.5"/>
<text x="1005" y="12" font-size="7.5" font-weight="bold" fill="#333" stroke="none" font-family="Liberation Sans" letter-spacing="-0.2">ABC</text>
<path d="M1008.5 15.5 L1011.5 19 L1018 12.5" stroke-width="1.3"/>
<path d="M1053.5 10 V5.5 H1044.5 V20.5 H1053.5 V18 M1047 9.5 H1051.5 M1047 12.5 H1050 M1047 15.5 H1049"/>
<path d="M1051 17 L1057 11 L1058.5 12.5 L1052.5 18.5 L1050.5 19 Z"/>
<path d="M1063.5 12 L1066 14.5 L1068.5 12"/>
<rect x="1095.5" y="6.5" width="12" height="14"/>
<path d="M1101.5 8.5 V18.5 M1097.5 13.5 H1105.5 M1100 10 L1101.5 8.5 L1103 10 M1100 17 L1101.5 18.5 L1103 17 M1099 12 L1097.5 13.5 L1099 15 M1104 12 L1105.5 13.5 L1104 15" stroke-width="0.9"/>
<path d="M1124.5 7.5 V19.5 M1140.5 7.5 V19.5 M1127 13.5 H1138 M1129 11.5 L1127 13.5 L1129 15.5 M1136 11.5 L1138 13.5 L1136 15.5"/>
<path d="M1158 13.5 H1168"/>
<path d="M1263.5 13.5 H1275 M1269.5 8 V19"/>
</svg>
<!-- scrollbar -->
<div class="a" style="left:1046px;top:156px;width:13px;height:13px;background:#f1f1f1;border:1px solid #cbcbcb"></div>
<svg style="left:1046px;top:156px" width="13" height="13"><path d="M3 8 L6.5 4.5 L10 8 Z" fill="#a0a0a0"/></svg>
<div class="a" style="left:1046px;top:170px;width:13px;height:270px;background:#f1f1f1;border:1px solid #cbcbcb"></div>
<div class="a" style="left:1049px;top:298px;width:7px;height:1px;background:#c0c0c0;box-shadow:0 2px 0 #c0c0c0,0 4px 0 #c0c0c0,0 6px 0 #c0c0c0,0 8px 0 #c0c0c0,0 10px 0 #c0c0c0,0 12px 0 #c0c0c0"></div>
<div class="a" style="left:1046px;top:757px;width:13px;height:12px;background:#f1f1f1;border:1px solid #cbcbcb"></div>
<svg style="left:1046px;top:757px" width="13" height="12"><path d="M3 4 L6.5 7.5 L10 4 Z" fill="#a0a0a0"/></svg>
</body></html>
